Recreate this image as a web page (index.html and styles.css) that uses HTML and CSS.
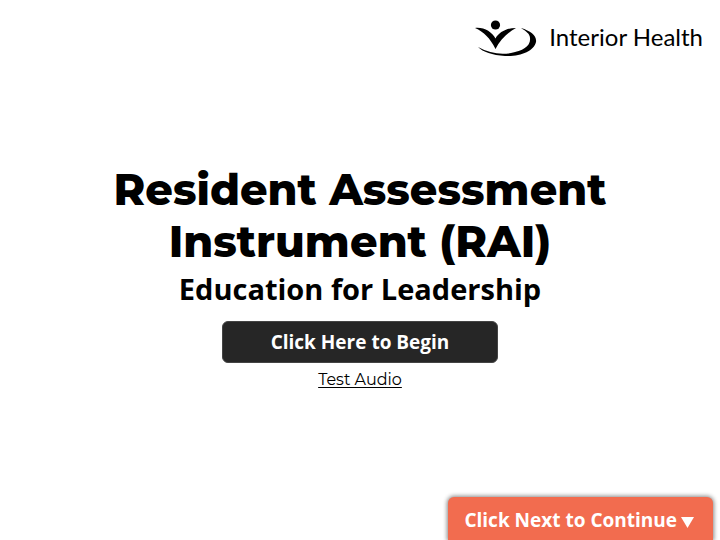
FILE: index.html
```html
<!DOCTYPE html>
<html lang="en">
<head>
<meta charset="utf-8">
<meta name="viewport" content="width=device-width, initial-scale=1">
<title>Resident Assessment Instrument (RAI)</title>
<link rel="stylesheet" href="styles.css">
</head>
<body>
<header class="brand">
  <svg class="brand-mark" viewBox="0 0 62 38" aria-hidden="true">
    <circle cx="20.500" cy="5" r="4.600"/>
    <path d="M0 8C9 7 17 12 20.500 18.500C24 12 32 8 41 8C32 13 25 20 20.500 29C15 18 9 12 0 8Z"/>
    <path d="M46 8C56 11 62 16 61 22C59 31 45 37 30 36C17 35 8 32 3 27C14 33 25 35 36 33C48 31 56 26 55 18C55 14 51 11 46 8Z"/>
  </svg>
  <span class="brand-name">Interior Health</span>
</header>
<main class="cover">
  <h1 class="title">Resident Assessment<br>Instrument (RAI)</h1>
  <p class="subtitle">Education for Leadership</p>
  <button class="begin" type="button">Click Here to Begin</button>
  <a class="audio" href="#">Test Audio</a>
</main>
<footer class="foot">
  <button class="next" type="button">Click Next to Continue
    <svg class="arrow" viewBox="0 0 13 11" aria-hidden="true"><path d="M0 0H13L6.500 11Z"/></svg>
  </button>
</footer>
</body>
</html>
```
FILE: styles.css
```css
* {
  box-sizing: border-box;
}

body {
  margin: 0;
  min-height: 100vh;
  display: flex;
  flex-direction: column;
  background: #fff;
  color: #000;
  font-family: "Open Sans", "Noto Sans", sans-serif;
}

.brand {
  display: flex;
  align-items: flex-start;
  justify-content: flex-end;
  gap: 12px;
  padding: 20px 17px 0;
}

.brand-mark {
  width: 62px;
  height: 38px;
}

.brand-name {
  font-family: "Gill Sans", Lato, sans-serif;
  font-size: 24px;
  line-height: 34px;
}

.cover {
  flex: 1;
  display: flex;
  flex-direction: column;
  align-items: center;
  padding-top: 106px;
  text-align: center;
}

.title {
  margin: 0;
  font-family: Montserrat, Inter, sans-serif;
  font-size: 43px;
  font-weight: 800;
  line-height: 52px;
}

.subtitle {
  margin: 0;
  font-family: "Open Sans", sans-serif;
  font-size: 29px;
  font-weight: 700;
  line-height: 42px;
}

.begin,
.next {
  border: 0;
  color: #fff;
  font-family: "Open Sans", sans-serif;
  font-size: 19px;
  font-weight: 700;
  cursor: pointer;
}

.begin {
  min-width: 276px;
  margin-top: 11px;
  padding: 8px 24px;
  border: 1px solid #444;
  border-radius: 6px;
  background: #262626;
  line-height: 24px;
}

.audio {
  margin-top: 5px;
  color: #000;
  font-family: Montserrat, Inter, sans-serif;
  font-size: 16px;
  line-height: 24px;
  text-underline-offset: 2px;
}

.foot {
  display: flex;
  justify-content: flex-end;
  padding-right: 7px;
}

.next {
  display: flex;
  align-items: center;
  gap: 4px;
  padding: 10px 19px 6px 16px;
  border-radius: 6px 6px 0 0;
  background: #f26c4f;
  box-shadow: 0 0 4px 1px #888;
  line-height: 27px;
}

.arrow {
  width: 13px;
  height: 11px;
  margin-top: 4px;
  fill: #fff;
}
```
